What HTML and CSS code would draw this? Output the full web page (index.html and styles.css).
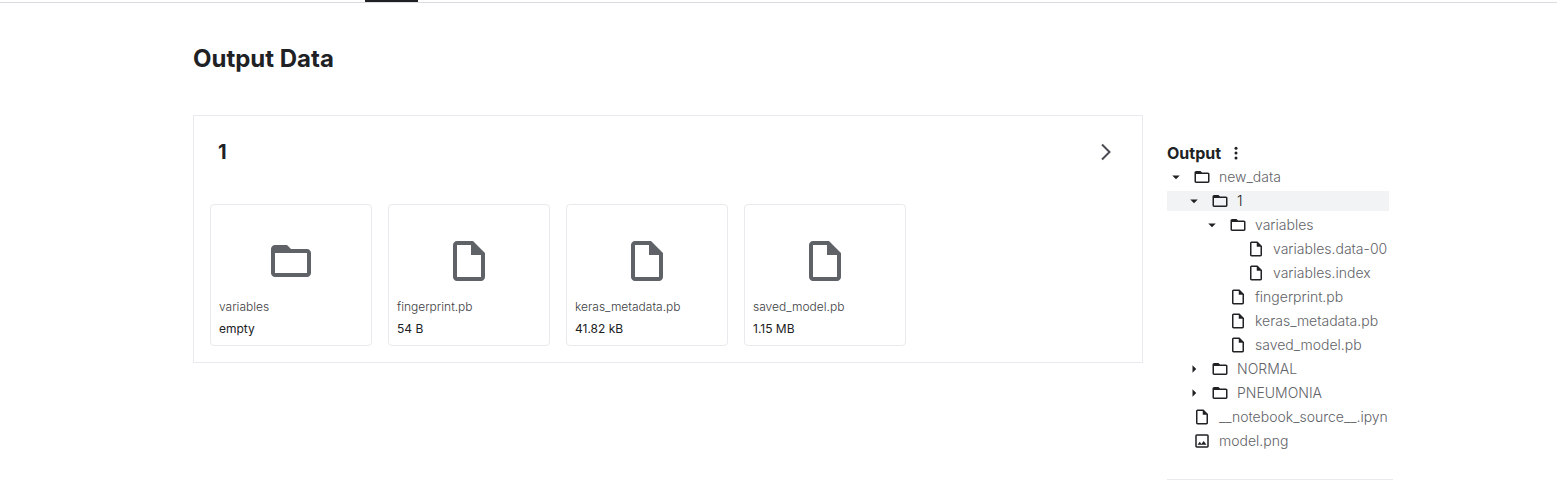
FILE: index.html
```
<!DOCTYPE html>
<html lang="en">
<head>
<meta charset="utf-8">
<title>Output Data</title>
<link rel="stylesheet" href="styles.css">
</head>
<body>
<svg class="sprite" aria-hidden="true">
  <symbol id="folder" viewBox="0 0 24 24"><path fill-rule="evenodd" d="M4 20q-.82 0-1.41-.59Q2 18.830 2 18V6q0-.82.59-1.41Q3.180 4 4 4h6l2 2h8q.83 0 1.410.59Q22 7.180 22 8v10q0 .83-.59 1.410Q20.830 20 20 20ZM4 8v10h16V8Z"/></symbol>
  <symbol id="file" viewBox="0 0 24 24"><path fill-rule="evenodd" d="M6 2q-.82 0-1.410.59Q4 3.180 4 4v16q0 .83.59 1.410Q5.180 22 6 22h12q.83 0 1.410-.59Q20 20.830 20 20V8l-6-6ZM13 9V4H6v16h12V9Z"/></symbol>
  <symbol id="image" viewBox="0 0 24 24"><path fill-rule="evenodd" d="M5 3q-.82 0-1.410.59Q3 4.180 3 5v14q0 .83.59 1.410Q4.180 21 5 21h14q.83 0 1.410-.59Q21 19.830 21 19V5q0-.82-.59-1.410Q19.830 3 19 3ZM5 5h14v14H5ZM6 17h12l-3.750-5-3 4L9 13Z"/></symbol>
  <symbol id="down" viewBox="0 0 24 24"><path d="M12 15 7 10h10Z"/></symbol>
  <symbol id="right" viewBox="0 0 24 24"><path d="M10 17V7l5 5Z"/></symbol>
  <symbol id="more" viewBox="0 0 24 24"><circle cx="12" cy="5.500" r="2"/><circle cx="12" cy="12" r="2"/><circle cx="12" cy="18.500" r="2"/></symbol>
  <symbol id="chevron" viewBox="0 0 24 24"><path d="m8 4.500 7.500 7.500L8 19.500" fill="none" stroke="currentColor" stroke-width="2"/></symbol>
</svg>

<nav class="tabs"><span class="tab-marker"></span></nav>

<main class="page">
  <h1 class="title">Output Data</h1>
  <div class="columns">
    <section class="panel">
      <header class="panel-head">
        <h2 class="panel-title">1</h2>
        <button class="icon-button" type="button" aria-label="Collapse"><svg class="icon-chevron"><use href="#chevron"/></svg></button>
      </header>
      <div class="cards">
        <article class="card"><svg class="icon-large"><use href="#folder"/></svg><p class="card-name">variables</p><p class="card-size">empty</p></article>
        <article class="card"><svg class="icon-large"><use href="#file"/></svg><p class="card-name">fingerprint.pb</p><p class="card-size">54 B</p></article>
        <article class="card"><svg class="icon-large"><use href="#file"/></svg><p class="card-name">keras_metadata.pb</p><p class="card-size">41.82 kB</p></article>
        <article class="card"><svg class="icon-large"><use href="#file"/></svg><p class="card-name">saved_model.pb</p><p class="card-size">1.15 MB</p></article>
      </div>
    </section>

    <aside class="side">
      <div class="side-head">
        <h2 class="side-title">Output</h2>
        <button class="icon-button" type="button" aria-label="More"><svg class="icon"><use href="#more"/></svg></button>
      </div>
      <ul class="tree">
        <li class="row"><svg class="icon"><use href="#down"/></svg><svg class="icon"><use href="#folder"/></svg><span class="label">new_data</span></li>
        <li class="row depth-1 selected"><svg class="icon"><use href="#down"/></svg><svg class="icon"><use href="#folder"/></svg><span class="label">1</span></li>
        <li class="row depth-2"><svg class="icon"><use href="#down"/></svg><svg class="icon"><use href="#folder"/></svg><span class="label">variables</span></li>
        <li class="row depth-3"><span class="icon"></span><svg class="icon"><use href="#file"/></svg><span class="label">variables.data-00</span></li>
        <li class="row depth-3"><span class="icon"></span><svg class="icon"><use href="#file"/></svg><span class="label">variables.index</span></li>
        <li class="row depth-2"><span class="icon"></span><svg class="icon"><use href="#file"/></svg><span class="label">fingerprint.pb</span></li>
        <li class="row depth-2"><span class="icon"></span><svg class="icon"><use href="#file"/></svg><span class="label">keras_metadata.pb</span></li>
        <li class="row depth-2"><span class="icon"></span><svg class="icon"><use href="#file"/></svg><span class="label">saved_model.pb</span></li>
        <li class="row depth-1"><svg class="icon"><use href="#right"/></svg><svg class="icon"><use href="#folder"/></svg><span class="label">NORMAL</span></li>
        <li class="row depth-1"><svg class="icon"><use href="#right"/></svg><svg class="icon"><use href="#folder"/></svg><span class="label">PNEUMONIA</span></li>
        <li class="row"><span class="icon"></span><svg class="icon"><use href="#file"/></svg><span class="label">__notebook_source__.ipyn</span></li>
        <li class="row"><span class="icon"></span><svg class="icon"><use href="#image"/></svg><span class="label">model.png</span></li>
      </ul>
    </aside>
  </div>
</main>
</body>
</html>
```
FILE: styles.css
```
* { box-sizing: border-box; }
body { margin: 0; background: #fff; color: #202124; font-family: Inter, sans-serif; }
h1, h2, p, ul { margin: 0; padding: 0; }
.sprite { display: none; }

.tabs { height: 3px; padding-left: 365px; border-bottom: 1px solid #dadce0; }
.tab-marker { display: block; width: 53px; height: 2px; background: #202124; }

.page { padding: 40px 164px 0 193px; }
.title { font-size: 24px; line-height: 32px; font-weight: 700; }
.columns { display: flex; align-items: flex-start; gap: 24px; margin-top: 40px; }

.panel { flex: 1; min-width: 0; border: 1px solid #e8eaed; padding: 0 16px 16px; }
.panel-head { display: flex; align-items: center; justify-content: space-between; height: 72px; padding: 0 8px; }
.panel-title { font-size: 20px; line-height: 24px; font-weight: 700; }
.icon-button { display: flex; padding: 0; border: 0; background: none; color: inherit; cursor: pointer; }
.icon-chevron { width: 24px; height: 24px; color: #494c50; }

.cards { display: flex; flex-wrap: wrap; gap: 16px; margin-top: 16px; }
.card { display: flex; flex-direction: column; width: 162px; padding: 32px 8px 5px; border: 1px solid #e8eaed; border-radius: 4px; font-size: 12px; line-height: 22px; }
.icon-large { width: 48px; height: 48px; margin-bottom: 11px; align-self: center; fill: #5f6368; }
.card-name { font-weight: 300; color: #3c4043; }
.card-size { font-weight: 400; }

.side { width: 226px; margin-top: 26px; padding-bottom: 28px; border-bottom: 1px solid #e8eaed; }
.side-head { display: flex; align-items: center; gap: 6px; height: 24px; }
.side-title { font-size: 16px; line-height: 24px; font-weight: 700; }
.tree { list-style: none; display: flex; flex-direction: column; gap: 4px; margin: 2px 4px 0 0; }
.row { display: flex; align-items: center; gap: 8px; height: 20px; font-size: 14px; line-height: 20px; font-weight: 300; color: #5f6368; white-space: nowrap; }
.depth-1 { padding-left: 18px; }
.depth-2 { padding-left: 36px; }
.depth-3 { padding-left: 54px; }
.selected { background: #f1f3f4; color: #202124; }
.icon { flex: none; width: 18px; height: 18px; fill: #202124; }
```
